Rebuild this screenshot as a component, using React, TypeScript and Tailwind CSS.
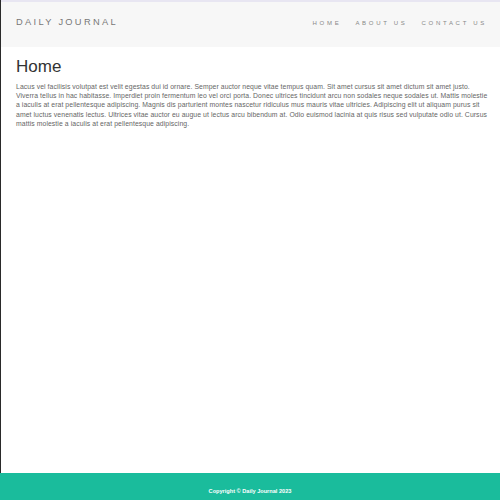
const navItems = ["HOME", "ABOUT US", "CONTACT US"];

// lines broken as in the reference
const bodyLines = [
  "Lacus vel facilisis volutpat est velit egestas dui id ornare. Semper auctor neque vitae tempus quam. Sit amet cursus sit amet dictum sit amet justo.",
  "Viverra tellus in hac habitasse. Imperdiet proin fermentum leo vel orci porta. Donec ultrices tincidunt arcu non sodales neque sodales ut. Mattis molestie",
  "a iaculis at erat pellentesque adipiscing. Magnis dis parturient montes nascetur ridiculus mus mauris vitae ultricies. Adipiscing elit ut aliquam purus sit",
  "amet luctus venenatis lectus. Ultrices vitae auctor eu augue ut lectus arcu bibendum at. Odio euismod lacinia at quis risus sed vulputate odio ut. Cursus",
  "mattis molestie a iaculis at erat pellentesque adipiscing.",
];

export default function App() {
  return (
    <div className="min-h-screen flex flex-col bg-white font-['Liberation_Sans',Arial,sans-serif]">
      <div className="flex-1 flex flex-col border-l border-[#2a2a2a]">
        {/* Navbar */}
        <nav className="border-t-2 border-[#e8e6f2] bg-[#f7f7f7] h-[47px] flex items-center justify-between pl-[15px] pr-[13px] pb-[3px]">
          <span className="text-[9.3px] tracking-[2.3px] text-[#777]">DAILY JOURNAL</span>
          <div className="flex items-center gap-[14px]">
            {navItems.map((item) => (
              <a key={item} href="#" className="text-[6px] tracking-[2.7px] text-[#888]">
                {item}
              </a>
            ))}
          </div>
        </nav>

        {/* Content */}
        <main className="flex-1 pl-[15px] pr-[10px]">
          <h1 className="mt-[10px] text-[17px] leading-[19px] text-[#333]">Home</h1>
          <p className="mt-[6px] text-[6.85px] leading-[9.2px] tracking-[0.08px] text-[#666]">
            {bodyLines.map((line) => (
              <span key={line} className="block whitespace-nowrap">
                {line}
              </span>
            ))}
          </p>
        </main>
      </div>

      {/* Footer */}
      <footer className="h-[27px] bg-[#1abc9c] pt-[14px] text-center">
        <p className="text-[5.6px] leading-[8px] font-bold text-white">Copyright © Daily Journal 2023</p>
      </footer>
    </div>
  );
}
